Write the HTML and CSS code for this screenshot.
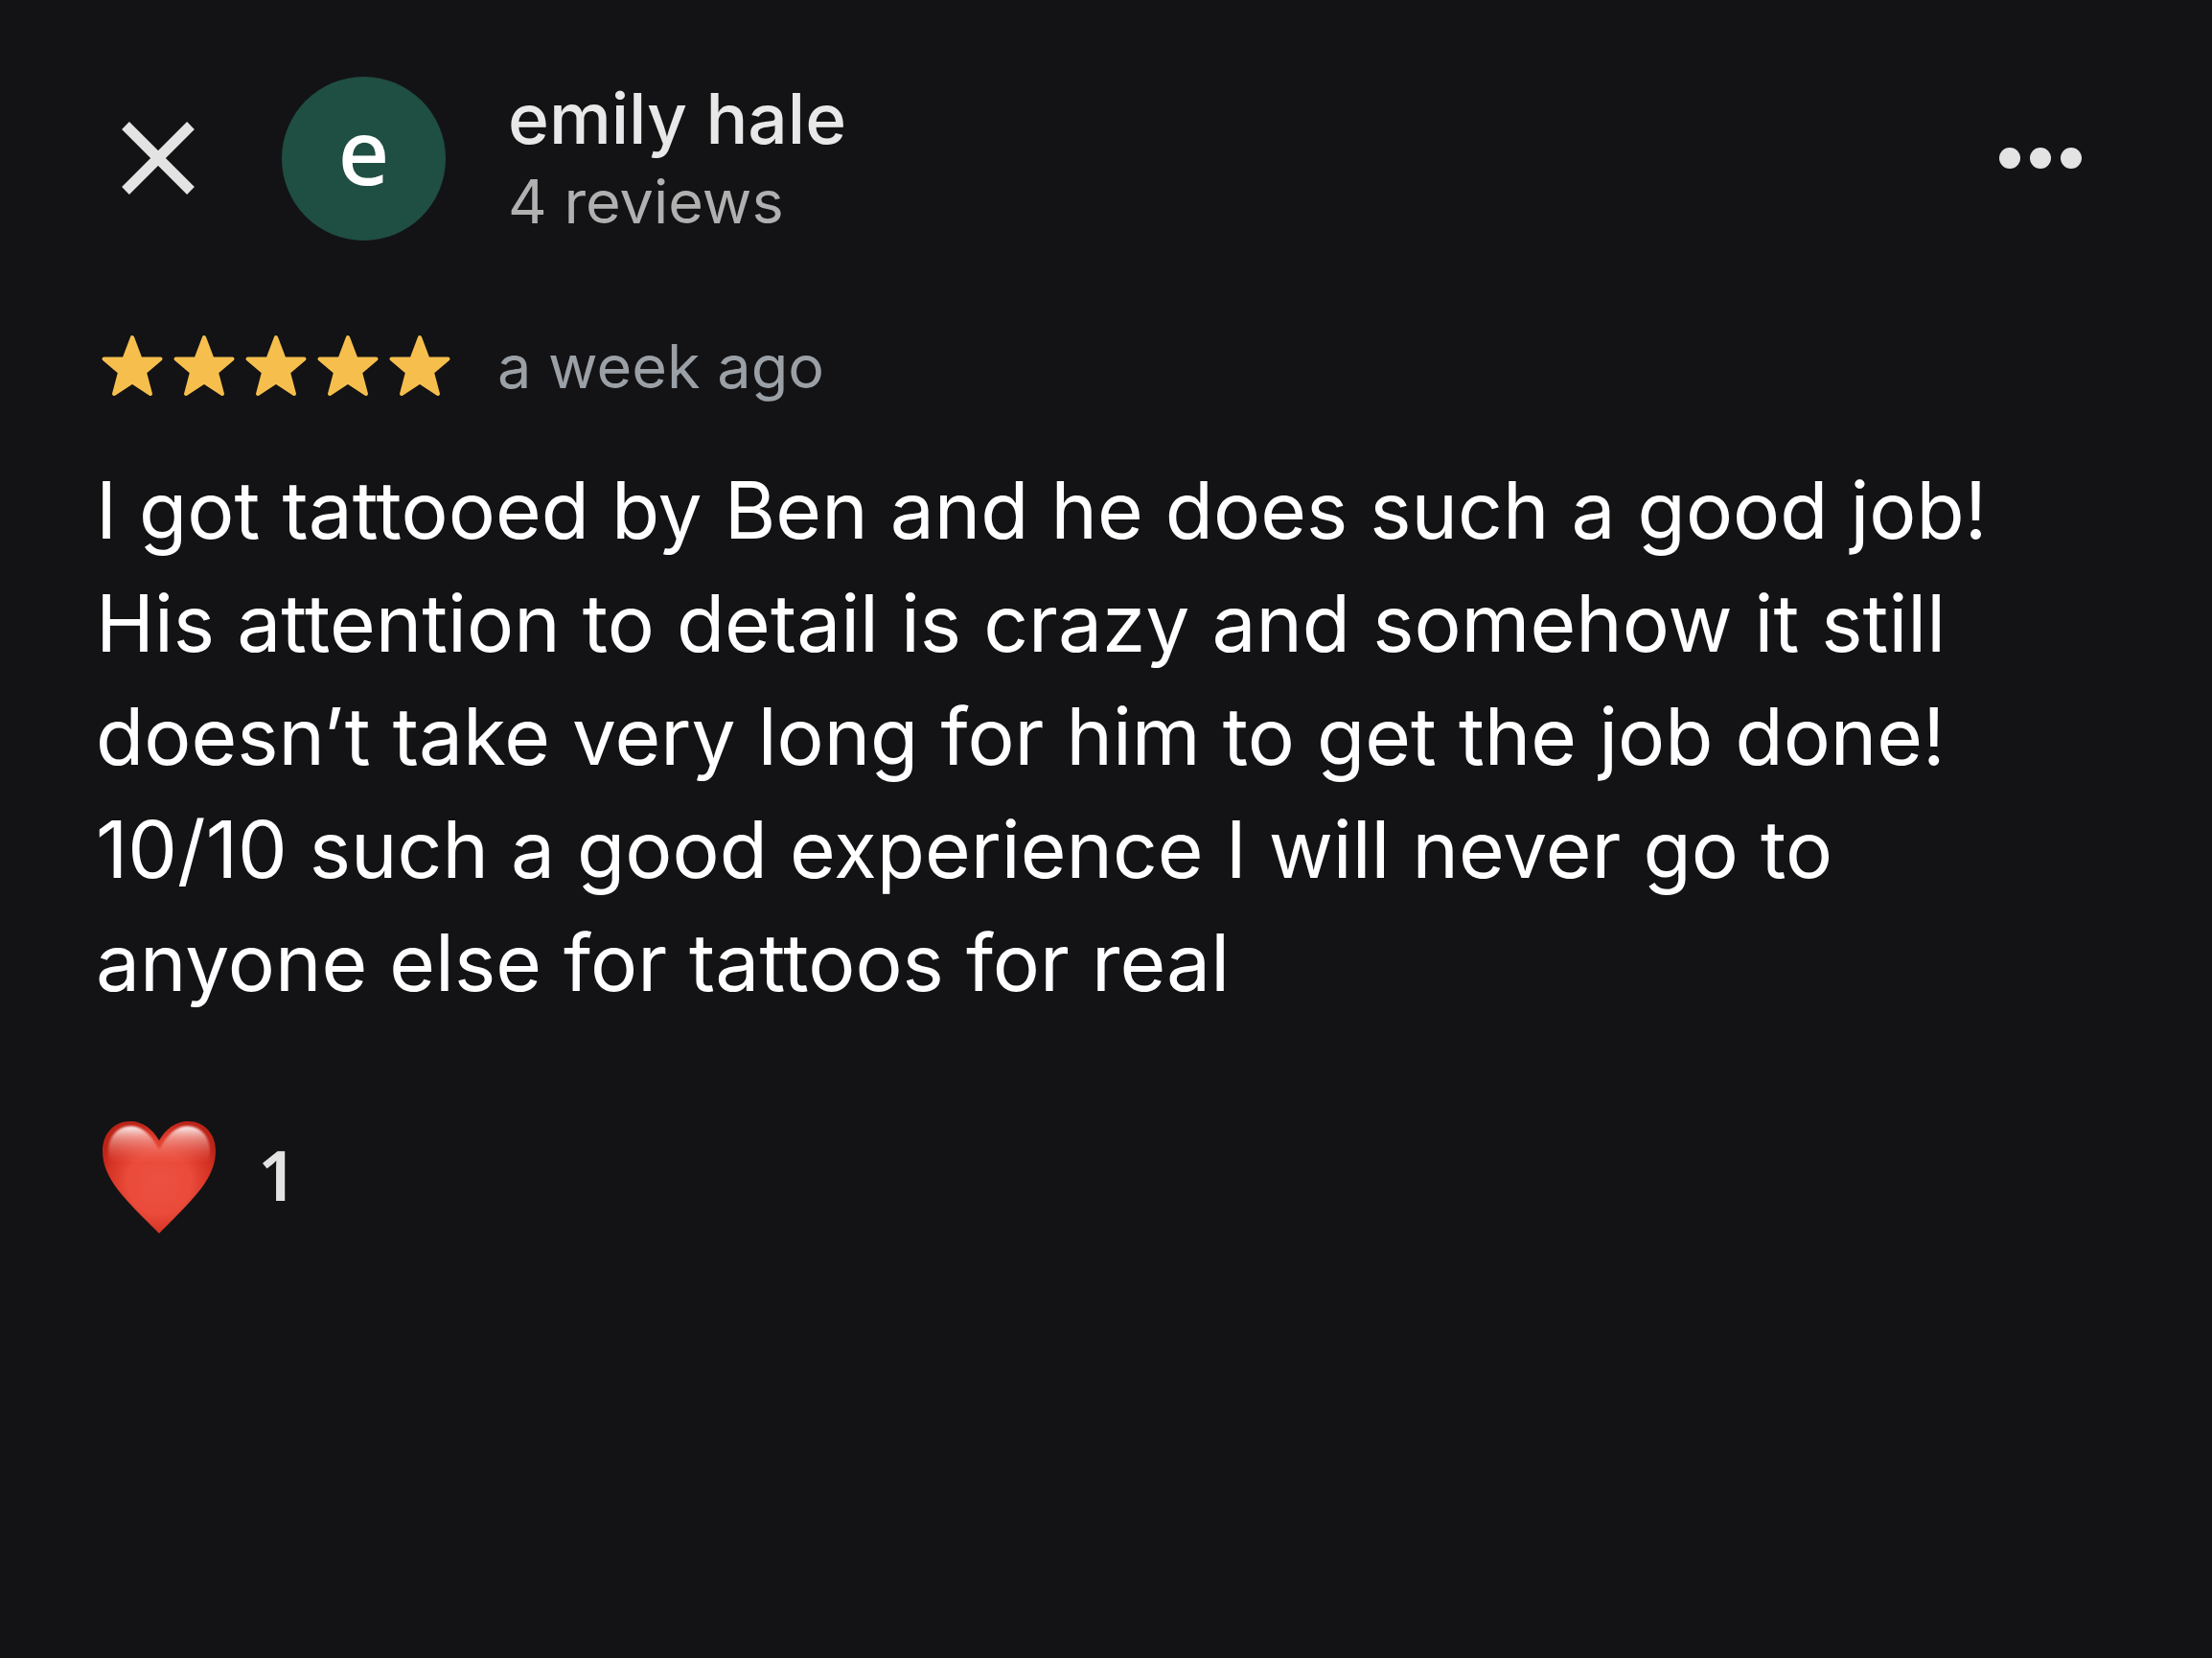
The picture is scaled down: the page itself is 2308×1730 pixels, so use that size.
FILE: index.html
```html
<!DOCTYPE html>
<html lang="en">
<head>
    <meta charset="UTF-8">
    <meta name="viewport" content="width=device-width, initial-scale=1.0">
    <title>Review by emily hale</title>
    <link rel="stylesheet" href="styles.css">
</head>
<body>
    <main class="review">
        <header class="review-header">
            <button class="icon-btn" type="button" aria-label="Close">
                <svg width="78" height="78" viewBox="0 0 78 78" fill="none" stroke="#e3e3e3" stroke-width="11">
                    <path d="M5 5L73 73M73 5L5 73"/>
                </svg>
            </button>
            <div class="avatar">e</div>
            <div class="author">
                <h1 class="author-name">emily hale</h1>
                <p class="author-count">4 reviews</p>
            </div>
            <button class="icon-btn more-btn" type="button" aria-label="More options">
                <svg width="88" height="24" viewBox="0 0 88 24" fill="#e3e3e3">
                    <circle cx="12" cy="12" r="11"/>
                    <circle cx="44" cy="12" r="11"/>
                    <circle cx="76" cy="12" r="11"/>
                </svg>
            </button>
        </header>

        <div class="rating">
            <svg class="stars" width="366" height="66" viewBox="0 0 366 66" role="img" aria-label="5 out of 5 stars">
                <defs>
                    <path id="star" d="M33 3L41.500 25.500L62.500 25.500L46 39.500L52 62L33 49.500L14 62L20 39.500L3.500 25.500L24.500 25.500Z"/>
                </defs>
                <use href="#star"/>
                <use href="#star" x="75"/>
                <use href="#star" x="150"/>
                <use href="#star" x="225"/>
                <use href="#star" x="300"/>
            </svg>
            <span class="date">a week ago</span>
        </div>

        <p class="review-text">
            I got tattooed by Ben and he does such a good job!<br>
            His attention to detail is crazy and somehow it still<br>
            doesn’t take very long for him to get the job done!<br>
            10/10 such a good experience I will never go to<br>
            anyone else for tattoos for real
        </p>

        <button class="reaction" type="button" aria-label="1 heart reaction">
            <svg width="118" height="117" viewBox="0 0 118 117">
                <defs>
                    <radialGradient id="heartFill" cx="59" cy="64" r="66" gradientUnits="userSpaceOnUse">
                        <stop offset="0" stop-color="#ea5141"/>
                        <stop offset="0.500" stop-color="#ea4b3a"/>
                        <stop offset="0.800" stop-color="#d63325"/>
                        <stop offset="1" stop-color="#bd2317"/>
                    </radialGradient>
                    <linearGradient id="heartShine" x1="0" y1="5" x2="0" y2="44" gradientUnits="userSpaceOnUse">
                        <stop offset="0" stop-color="#fff" stop-opacity="0.950"/>
                        <stop offset="0.300" stop-color="#fbc5bd" stop-opacity="0.650"/>
                        <stop offset="1" stop-color="#f0695c" stop-opacity="0"/>
                    </linearGradient>
                    <filter id="soft" x="-10%" y="-10%" width="120%" height="120%">
                        <feGaussianBlur stdDeviation="1"/>
                    </filter>
                </defs>
                <path fill="url(#heartFill)" d="M59 20C52 8 42 0 29 0C12 0 0 13 0 31C0 60 24 82 59 117C94 82 118 60 118 31C118 13 106 0 89 0C76 0 66 8 59 20Z"/>
                <g fill="url(#heartShine)" filter="url(#soft)">
                    <path d="M59 30C51 14 41 5 30 5C15 5 6 17 6 31C6 37 7 42 9 46L59 46Z"/>
                    <path d="M59 30C67 14 77 5 88 5C103 5 112 17 112 31C112 37 111 42 109 46L59 46Z"/>
                </g>
            </svg>
            <span class="reaction-count">1</span>
        </button>
    </main>
</body>
</html>
```
FILE: styles.css
```css
* {
    box-sizing: border-box;
}
body {
    margin: 0;
    background: #131315;
    color: #fff;
    font-family: Inter, "Liberation Sans", sans-serif;
}
h1, p {
    margin: 0;
}
button {
    padding: 0;
    border: 0;
    background: none;
    color: inherit;
    cursor: pointer;
}
svg {
    display: block;
}
.review {
    padding: 79px 100px;
}
.review-header {
    display: flex;
    align-items: center;
    padding: 0 35px 0 26px;
}
.icon-btn {
    flex: none;
}
.avatar {
    display: flex;
    align-items: center;
    justify-content: center;
    flex: none;
    width: 171px;
    height: 171px;
    margin: 0 65px 0 90px;
    padding-bottom: 16px;
    border-radius: 50%;
    background: #1f4e42;
    font: 500 94px/1 "Noto Sans", sans-serif;
}
.author-name {
    color: #e8e8e8;
    font-size: 73px;
    font-weight: 500;
    line-height: 90px;
}
.author-count {
    color: #b0b0b0;
    font-size: 63px;
    line-height: 82px;
}
.more-btn {
    margin-left: auto;
}
.rating {
    display: flex;
    align-items: center;
    gap: 48px;
    margin-top: 90px;
    padding-left: 5px;
}
.stars {
    fill: #f6bf4d;
    stroke: #f6bf4d;
    stroke-width: 4px;
    stroke-linejoin: round;
}
.date {
    color: #9aa0a6;
    font-size: 63px;
    line-height: 82px;
}
.review-text {
    margin-top: 51px;
    font-size: 82px;
    line-height: 118px;
}
.reaction {
    display: flex;
    align-items: center;
    gap: 44px;
    margin: 106px 0 0 7px;
    color: #e3e3e3;
    font: 600 72px/1 "Noto Sans", sans-serif;
}
.reaction-count {
    padding-bottom: 8px;
}
```
